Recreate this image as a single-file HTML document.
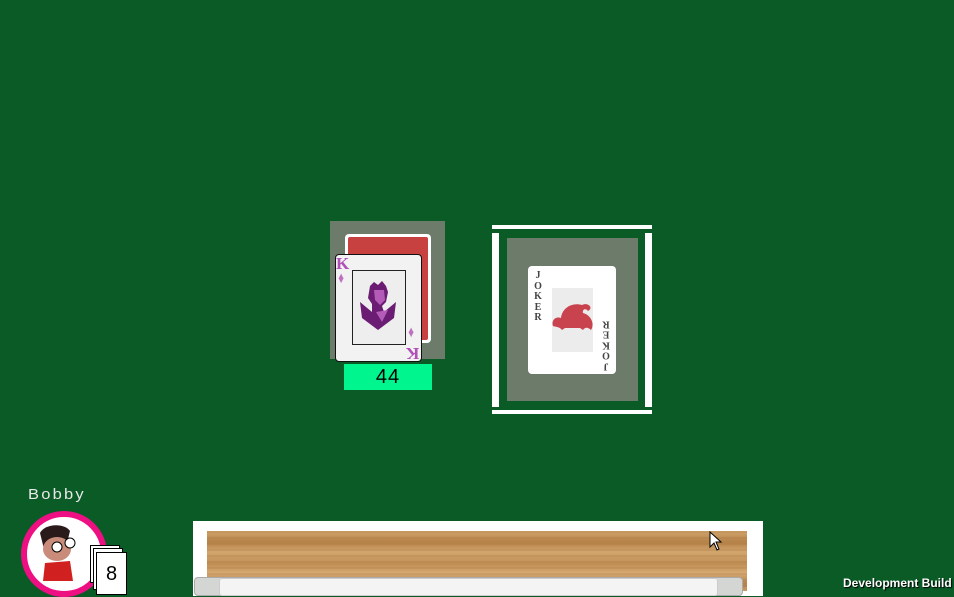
<!DOCTYPE html>
<html><head><meta charset="utf-8"><style>
*{margin:0;padding:0;box-sizing:border-box}
html,body{width:954px;height:596px}
body{background:#0a5b26;position:relative;overflow:hidden;font-family:"Liberation Sans",sans-serif}
.a{position:absolute}
</style></head><body>
<div class="a" style="left:330px;top:221px;width:115px;height:138px;background:#6d7b6b"></div>
<div class="a" style="left:345px;top:234px;width:86px;height:109px;background:#fff;border-radius:4px"></div>
<div class="a" style="left:348px;top:237px;width:80px;height:103px;background:#c84141;border-radius:2px"></div>
<div class="a" style="left:335px;top:254px;width:87px;height:108px;background:#f2f2f2;border:1px solid #111;border-radius:4px"></div>
<div class="a" style="left:352px;top:270px;width:54px;height:75px;border:1px solid #222;background:#eee"></div>
<div class="a" style="left:336px;top:254px;color:#b04fb5;font:bold 17px 'Liberation Serif',serif">K</div>
<div class="a" style="left:337px;top:270px;color:#c070c0;font-size:16px;transform:scaleX(.7)">♦</div>
<div class="a" style="left:407px;top:324px;color:#c070c0;font-size:16px;transform:scaleX(.7)">♦</div>
<div class="a" style="left:406px;top:343px;color:#b04fb5;font:bold 17px 'Liberation Serif',serif;transform:rotate(180deg)">K</div>
<svg class="a" style="left:358px;top:280px" width="42" height="55" viewBox="0 0 42 55">
<path d="M12 6 L16 2 L20 5 L24 1 L28 6 L30 12 L28 22 L24 26 L26 32 L38 22 L36 38 L20 50 L4 38 L2 22 L14 32 L14 24 L10 18 Z" fill="#6a1d72"/>
<path d="M16 10 L26 10 L27 20 L22 25 L17 20 Z M18 32 L30 30 L24 42 Z" fill="#b45ab8"/>
</svg>
<div class="a" style="left:344px;top:364px;width:88px;height:26px;background:#00f58f;color:#000;font-size:20px;text-align:center;line-height:26px;letter-spacing:1px">44</div>
<div class="a" style="left:492px;top:225px;width:160px;height:4px;background:#fff"></div>
<div class="a" style="left:492px;top:410px;width:160px;height:4px;background:#fff"></div>
<div class="a" style="left:492px;top:233px;width:7px;height:174px;background:#fff"></div>
<div class="a" style="left:645px;top:233px;width:7px;height:174px;background:#fff"></div>
<div class="a" style="left:507px;top:238px;width:131px;height:163px;background:#6d7b6b"></div>
<div class="a" style="left:528px;top:266px;width:88px;height:108px;background:#fff;border-radius:4px"></div>
<div class="a" style="left:552px;top:288px;width:41px;height:64px;background:#ececec"></div>
<div class="a" style="left:534px;top:271px;width:8px;font:bold 10px 'Liberation Serif',serif;color:#444;line-height:10.5px;text-align:center">J<br>O<br>K<br>E<br>R</div>
<div class="a" style="left:602px;top:318px;width:8px;font:bold 10px 'Liberation Serif',serif;color:#444;line-height:10.5px;text-align:center;transform:rotate(180deg)">J<br>O<br>K<br>E<br>R</div>
<svg class="a" style="left:550px;top:300px" width="45" height="36" viewBox="0 0 45 36">
<path d="M3 26 C1 20 6 16 11 18 C12 8 22 2 32 5 C38 2 44 8 38 11 C36 8 32 9 33 13 C41 15 45 24 41 30 C38 27 35 27 33 30 L30 28 L15 28 L12 30 C10 27 6 27 3 26 Z" fill="#c9434f"/>
</svg>
<div class="a" style="left:28px;top:486px;color:#e8e8e8;font-size:15px;letter-spacing:2px;transform:scaleX(1.1);transform-origin:left">Bobby</div>
<div class="a" style="left:21px;top:511px;width:86px;height:86px;border-radius:50%;background:#fff;border:6px solid #ee0f82"></div>
<svg class="a" style="left:35px;top:523px" width="50" height="60" viewBox="0 0 50 60">
<path d="M5 10 C10 0 30 0 35 8 L32 20 L10 30 Z" fill="#2a1a1a"/>
<ellipse cx="22" cy="26" rx="14" ry="12" fill="#c98c7a"/>
<circle cx="22" cy="24" r="5" fill="#fff" stroke="#000"/>
<circle cx="35" cy="20" r="5" fill="#fff" stroke="#000"/>
<path d="M10 40 L35 38 L38 58 L8 58 Z" fill="#d02020"/>
</svg>
<div class="a" style="left:90px;top:545px;width:30px;height:38px;background:#fff;border:1px solid #000"></div>
<div class="a" style="left:93px;top:548px;width:30px;height:42px;background:#fff;border:1px solid #000"></div>
<div class="a" style="left:96px;top:552px;width:31px;height:43px;background:#fff;border:1.5px solid #000;font-size:20px;text-align:center;line-height:42px;color:#000">8</div>
<div class="a" style="left:193px;top:521px;width:570px;height:75px;background:#fff"></div>
<div class="a" style="left:207px;top:531px;width:540px;height:60px;background:linear-gradient(180deg,#d0a46c 0%,#b58248 18%,#d2a66e 35%,#bf8e55 55%,#d6aa72 70%,#b5804a 88%,#cc9d63 100%)"></div>
<div class="a" style="left:207px;top:531px;width:540px;height:60px;background:repeating-linear-gradient(180deg,rgba(140,85,35,.12) 0 2px,transparent 2px 6px)"></div>
<div class="a" style="left:194px;top:577px;width:549px;height:19px;background:#d3d6d3;border:1px solid #aaa;border-radius:4px"></div>
<div class="a" style="left:219px;top:578px;width:499px;height:18px;background:#f4f4f4;border-radius:3px;border:1px solid #ccc"></div>
<svg class="a" style="left:709px;top:531px" width="14" height="22" viewBox="0 0 14 22"><path d="M1 1 L1 16 L5 12 L8 19 L10 18 L7 11 L12 11 Z" fill="#fff" stroke="#000"/></svg>
<div class="a" style="left:843px;top:576px;color:#fff;font-weight:bold;font-size:12px;text-shadow:1px 1px 1px #000">Development Build</div>
</body></html>
